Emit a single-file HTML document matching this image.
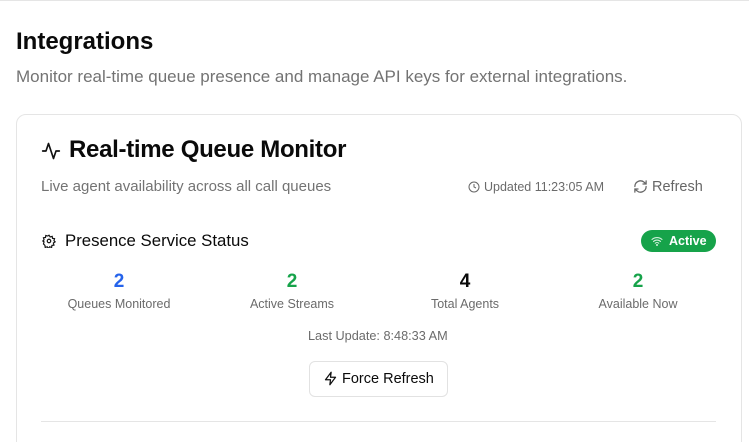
<!DOCTYPE html>
<html style="height:442px;overflow:hidden"><head><style>
*{margin:0;padding:0;box-sizing:border-box}
body{width:749px;height:442px;overflow:hidden;background:#fff;font-family:"Liberation Sans",sans-serif;position:relative;color:#0a0a0a;border-top:1px solid #e5e5e5}
.a{position:absolute;white-space:nowrap}
.card{position:absolute;left:16px;top:113px;width:726px;height:340px;border:1px solid #e5e5e5;border-radius:10px}
.num{font-size:19px;font-weight:bold;text-align:center;width:160px}
.lab{font-size:12.5px;color:#6b6b6b;text-align:center;width:160px}
</style></head><body>
<div class="a" style="left:16px;top:27px;font-size:24px;font-weight:bold">Integrations</div>
<div class="a" style="left:16px;top:66px;font-size:17px;color:#737373">Monitor real-time queue presence and manage API keys for external integrations.</div>
<div class="card"></div>
<svg class="a" style="left:41px;top:140px" width="20" height="20" viewBox="0 0 24 24" fill="none" stroke="#111" stroke-width="2" stroke-linecap="round" stroke-linejoin="round"><path d="M22 12h-4l-3 9L9 3l-3 9H2"/></svg>
<div class="a" style="left:69px;top:135px;font-size:24px;font-weight:bold;letter-spacing:-0.3px">Real-time Queue Monitor</div>
<div class="a" style="left:41px;top:177px;font-size:15px;color:#737373">Live agent availability across all call queues</div>
<svg class="a" style="left:468px;top:180px" width="12" height="12" viewBox="0 0 24 24" fill="none" stroke="#666" stroke-width="2"><circle cx="12" cy="12" r="10"/><path d="M12 6v6l4 2"/></svg>
<div class="a" style="left:484px;top:179px;font-size:12.5px;color:#6b6b6b">Updated 11:23:05 AM</div>
<svg class="a" style="left:633px;top:178px" width="15" height="15" viewBox="0 0 24 24" fill="none" stroke="#666" stroke-width="2" stroke-linecap="round"><path d="M3 12a9 9 0 0 1 15-6.7L21 8M21 3v5h-5M21 12a9 9 0 0 1-15 6.7L3 16M3 21v-5h5"/></svg>
<div class="a" style="left:652px;top:178px;font-size:14.5px;color:#666">Refresh</div>
<svg class="a" style="left:42px;top:233px" width="14" height="14" viewBox="0 0 24 24" fill="none" stroke="#111" stroke-width="2"><circle cx="12" cy="12" r="3"/><path d="M12 2l2 3 3.5-1 .5 3.5 3.5.5-1 3.5 2 2-3 2 1 3.5-3.5.5-.5 3.5-3.5-1-2 3-2-3-3.5 1-.5-3.5L2.5 17l1-3.5-2-1.5 2-2-1-3.5 3.5-.5.5-3.5 3.5 1z"/></svg>
<div class="a" style="left:65px;top:230px;font-size:16.8px">Presence Service Status</div>
<div class="a" style="left:641px;top:229px;width:75px;height:22px;border-radius:11px;background:#16a34a;color:#fff;font-size:12.5px;font-weight:bold;line-height:22px;padding-left:28px">Active</div>
<svg class="a" style="left:651px;top:234px" width="12" height="12" viewBox="0 0 24 24" fill="none" stroke="#cfeed9" stroke-width="2.2" stroke-linecap="round"><path d="M2 9a15 15 0 0 1 20 0M5 13a10 10 0 0 1 14 0M8.5 16.5a5 5 0 0 1 7 0"/><circle cx="12" cy="20" r="1"/></svg>
<div class="a num" style="left:39px;top:270px;color:#2563eb">2</div>
<div class="a num" style="left:212px;top:270px;color:#16a34a">2</div>
<div class="a num" style="left:385px;top:270px">4</div>
<div class="a num" style="left:558px;top:270px;color:#16a34a">2</div>
<div class="a lab" style="left:39px;top:296px">Queues Monitored</div>
<div class="a lab" style="left:212px;top:296px">Active Streams</div>
<div class="a lab" style="left:385px;top:296px">Total Agents</div>
<div class="a lab" style="left:558px;top:296px">Available Now</div>
<div class="a" style="left:308px;top:328px;font-size:12.7px;color:#6b6b6b">Last Update: 8:48:33 AM</div>
<div class="a" style="left:309px;top:360px;width:139px;height:36px;border:1px solid #e2e2e2;border-radius:6px"></div>
<svg class="a" style="left:323px;top:370px" width="15" height="15" viewBox="0 0 24 24" fill="none" stroke="#111" stroke-width="2" stroke-linejoin="round"><path d="M13 2L4 14h8l-1 8 9-12h-8z"/></svg>
<div class="a" style="left:342px;top:370px;font-size:14.5px">Force Refresh</div>
<div class="a" style="left:41px;top:420px;width:675px;height:1px;background:#e5e5e5"></div>
</body></html>
